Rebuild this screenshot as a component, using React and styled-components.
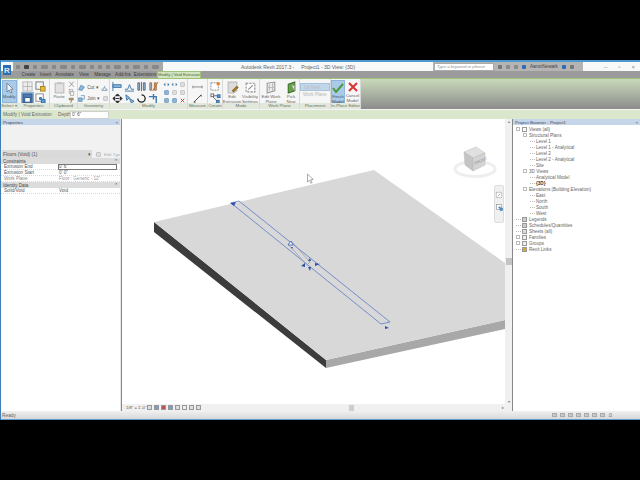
import React from 'react';
import styled, { createGlobalStyle } from 'styled-components';

const Global = createGlobalStyle`
  html, body { margin: 0; padding: 0; background: #000; }
  * { box-sizing: border-box; }
`;

const Page = styled.div`
  width: 640px;
  height: 480px;
  padding: 60px 0;
  background: #000;
  font-family: "Liberation Sans", Arial, sans-serif;
  font-size: 4.6px;
  color: #555;
  overflow: hidden;
`;

const Win = styled.div`
  height: 360px;
  display: flex;
  flex-direction: column;
  background: #f2f2f2;
  border-left: 1px solid #3d7fb5;
`;

const TitleBar = styled.div`
  position: relative;
  height: 11px;
  flex: none;
  display: flex;
  align-items: center;
  border-top: 2px solid #4a9ad0;
  background: #f7f8f8;
`;

const AppLogo = styled.div`
  width: 12px;
  height: 12px;
  padding: 3px 0 0 2px;
  flex: none;
  align-self: flex-start;
  z-index: 2;
  position: relative;
  line-height: 0;
`;

const Qat = styled.div`
  width: 150px;
  height: 9px;
  display: flex;
  align-items: center;
  gap: 4px;
  padding: 0 3px;
  background: #a8a8a8;
  flex: none;
`;

const QatIcon = styled.span`
  width: ${p => p.w || 4}px;
  height: 4px;
  flex: none;
  background: ${p => p.c || '#8a8a8a'};
  border-radius: 1px;
`;

const TitleText = styled.div`
  width: 270px;
  flex: none;
  text-align: center;
  font-size: 5px;
  color: #666;
  white-space: pre;
`;

const HelpBar = styled.div`
  width: 150px;
  height: 9px;
  flex: none;
  display: flex;
  align-items: center;
  gap: 4px;
  padding-left: 1px;
  background: #b4b4b4;
`;

const SearchBox = styled.div`
  width: 60px;
  height: 8px;
  flex: none;
  background: #fff;
  border: 1px solid #aaa;
  color: #888;
  font-style: italic;
  font-size: 4.2px;
  line-height: 6px;
  padding-left: 2px;
`;

const UserName = styled.span`
  color: #444;
  font-size: 4.6px;
  white-space: nowrap;
`;

const WinButtons = styled.div`
  flex: 1;
  display: flex;
  justify-content: flex-end;
  gap: 11px;
  padding-right: 5px;
  color: #888;
  font-size: 6px;
`;

const TabBar = styled.div`
  height: 7px;
  flex: none;
  display: flex;
  align-items: flex-end;
  background: #9b9b9b;
  padding-left: 18px;
  position: relative;
`;

const Tab = styled.div`
  height: 7px;
  width: ${p => p.w}px;
  flex: none;
  text-align: center;
  white-space: nowrap;
  overflow: hidden;
  font-size: ${p => (p.active ? 4.2 : 4.6)}px;
  color: ${p => (p.active ? '#4a6a38' : '#3a3a3a')};
  background: ${p => (p.active ? '#d4e4c0' : 'transparent')};
  border: ${p => (p.active ? '1px solid #9cc27c' : 'none')};
  border-bottom: none;
  line-height: ${p => (p.active ? '6px' : '7px')};
`;

const Ribbon = styled.div`
  height: 31px;
  flex: none;
  display: flex;
  border-top: 1px solid #9cc27c;
  background: linear-gradient(#c9d9ba, #8c8c8c);
`;

const Panel = styled.div`
  width: ${p => p.w}px;
  flex: none;
  display: flex;
  flex-direction: column;
  background: #f5f6f5;
  border-right: 1px solid #d8d8d8;
`;

const PanelBody = styled.div`
  flex: 1;
  display: flex;
  justify-content: ${p => p.justify || 'center'};
  align-items: flex-start;
  gap: ${p => p.gap || 0}px;
  padding-top: 1px;
  min-height: 0;
`;

const PanelLabel = styled.div`
  height: 6px;
  flex: none;
  text-align: center;
  white-space: nowrap;
  overflow: hidden;
  line-height: 6px;
  font-size: 4.4px;
  background: #e2e8dc;
  color: #66735c;
`;

const BigButton = styled.div`
  width: ${p => p.w || 18}px;
  height: 23px;
  flex: none;
  display: flex;
  flex-direction: column;
  align-items: center;
  text-align: center;
  line-height: 5px;
  font-size: 4.4px;
  padding-top: 1px;
  color: ${p => (p.on ? '#456' : '#666')};
  background: ${p => (p.on ? '#a9cbe8' : 'transparent')};
  border: ${p => (p.on ? '1px solid #8fb5d8' : 'none')};
`;

const IconGrid = styled.div`
  display: grid;
  grid-template-columns: repeat(${p => p.cols}, ${p => p.size}px);
  grid-auto-rows: ${p => p.rowh || p.size}px;
  gap: ${p => p.gap || 0}px;
  justify-items: center;
  align-items: center;
`;

const Cell = styled.div`
  display: flex;
  align-items: center;
  justify-content: center;
  background: ${p => (p.on ? '#a9cbe8' : 'transparent')};
  outline: ${p => (p.on ? '1px solid #8fb5d8' : 'none')};
`;

const GeoCol = styled.div`
  display: flex;
  flex-direction: column;
  gap: 3px;
  padding-top: 3px;
`;

const GeoRow = styled.div`
  display: flex;
  align-items: center;
  gap: 2px;
  height: 8px;
  white-space: nowrap;
`;

const DisabledBtn = styled.div`
  width: 30px;
  height: 8px;
  margin-top: ${p => p.mt || 0}px;
  padding-left: 3px;
  line-height: 7px;
  white-space: nowrap;
  color: #b8b8b8;
  background: ${p => (p.on ? '#c2d6ea' : 'transparent')};
  border: ${p => (p.on ? '1px solid #a7c3de' : 'none')};
`;

const OptionsBar = styled.div`
  height: 10px;
  flex: none;
  display: flex;
  align-items: center;
  border-top: 1px solid #f4f4f4;
  background: #dbe7cd;
  padding-left: 2px;
`;

const OptionLabel = styled.span`
  width: ${p => p.w}px;
  flex: none;
  color: #666;
  font-size: 4.8px;
  white-space: nowrap;
`;

const OptionInput = styled.div`
  width: 39px;
  height: 8px;
  background: #fff;
  border: 1px solid #d0d0d0;
  line-height: 6px;
  padding-left: 1px;
  font-size: 4.8px;
`;

const Main = styled.div`
  flex: 1;
  min-height: 0;
  display: flex;
`;

const Dock = styled.div`
  width: ${p => p.w}px;
  flex: none;
  display: flex;
  flex-direction: column;
  background: #fff;
`;

const DockHeader = styled.div`
  height: 6px;
  flex: none;
  display: flex;
  justify-content: space-between;
  align-items: center;
  padding: 0 2px;
  background: #c5d6ea;
  color: #445;
  font-size: 4.4px;
`;

const PropsHead = styled.div`
  height: 25px;
  flex: none;
  background: #f1f1f1;
`;

const TypeRow = styled.div`
  height: 8px;
  flex: none;
  display: flex;
  align-items: center;
  gap: 3px;
  padding: 0 1px;
  background: #f1f1f1;
`;

const TypeSelect = styled.div`
  width: 90px;
  height: 8px;
  flex: none;
  display: flex;
  justify-content: space-between;
  align-items: center;
  padding: 0 1px;
  background: #dadada;
  color: #555;
  font-size: 4.8px;
`;

const EditType = styled.div`
  color: #b0b0b0;
  display: flex;
  align-items: center;
  gap: 2px;
  font-size: 4.4px;
  white-space: nowrap;
`;

const GroupRow = styled.div`
  height: 6px;
  display: flex;
  justify-content: space-between;
  align-items: center;
  padding: 0 2px;
  background: #dcdcdc;
  color: #444;
  font-size: 4.5px;
`;

const PropRow = styled.div`
  display: grid;
  grid-template-columns: 57px 1fr;
  height: 6px;
  line-height: 6px;
  white-space: nowrap;
  border-bottom: 1px dotted #dadada;
`;

const PropName = styled.div`
  padding-left: 3px;
  color: ${p => (p.muted ? '#888' : '#555')};
`;

const PropValue = styled.div`
  padding-left: 1px;
  color: ${p => (p.muted ? '#999' : '#555')};
  outline: ${p => (p.focus ? '1px solid #777' : 'none')};
  outline-offset: -1px;
  margin-right: ${p => (p.focus ? 3 : 0)}px;
`;

const Gutter = styled.div`
  width: 2px;
  flex: none;
  background: #e6e6e6;
  border-right: 1px solid #888;
`;

const ViewCol = styled.div`
  width: 383px;
  flex: none;
  display: flex;
  flex-direction: column;
  background: #fff;
`;

const Canvas = styled.div`
  position: relative;
  flex: 1;
  min-height: 0;
  overflow: hidden;
  background: #fff;

  & > svg.scene { display: block; }
`;

const Cube = styled.div`
  position: absolute;
  left: 331px;
  top: 24px;
  width: 44px;
  height: 38px;
`;

const NavBar = styled.div`
  position: absolute;
  left: 372px;
  top: 66px;
  width: 10px;
  height: 38px;
  display: flex;
  flex-direction: column;
  align-items: center;
  gap: 5px;
  padding-top: 5px;
  background: #f0f0f0;
  border: 1px solid #ddd;
  border-radius: 2px;
`;

const ViewBar = styled.div`
  height: 7px;
  flex: none;
  display: flex;
  align-items: center;
  gap: 1px;
  background: #f0f0f0;
  padding-left: 4px;
`;

const Scale = styled.span`
  width: 20px;
  flex: none;
  color: #555;
  font-size: 4.2px;
  white-space: nowrap;
`;

const HScroll = styled.div`
  flex: 1;
  display: flex;
  justify-content: space-between;
  align-items: center;
  padding: 0 1px 0 146px;
  color: #777;
  font-size: 4px;
`;

const HThumb = styled.div`
  width: 5px;
  height: 6px;
  background: #cdcdcd;
`;

const VScroll = styled.div`
  width: 8px;
  flex: none;
  display: flex;
  flex-direction: column;
  justify-content: space-between;
  align-items: center;
  background: #f0f0f0;
  border-right: 1px solid #888;
  color: #777;
  font-size: 4px;
  padding-bottom: 7px;
`;

const VThumb = styled.div`
  width: 6px;
  height: 7px;
  background: #c4c4c4;
`;

const TreeBody = styled.div`
  flex: 1;
  padding-top: 1px;
  background: #fff;
`;

const TreeRow = styled.div`
  height: 6px;
  display: flex;
  align-items: center;
  gap: 1px;
  padding-left: ${p => 3 + p.level * 7}px;
  color: ${p => (p.bold ? '#333' : '#666')};
  font-weight: ${p => (p.bold ? 'bold' : 'normal')};
  white-space: nowrap;
`;

const Expander = styled.span`
  width: 4px;
  height: 4px;
  flex: none;
  border: 1px solid #bbb;
  margin-right: 1px;
`;

const Dots = styled.span`
  width: 5px;
  flex: none;
  border-top: 1px dotted #bbb;
`;

const Node = styled.span`
  width: 5px;
  height: 5px;
  flex: none;
  margin-right: 1px;
  border: 1px solid #999;
  background: ${p => p.c || '#ddd'};
`;

const StatusBar = styled.div`
  height: 9px;
  flex: none;
  display: flex;
  justify-content: space-between;
  align-items: center;
  padding: 0 28px 0 1px;
  background: linear-gradient(#f0f0f0, #d8d8d8);
  border-bottom: 1px solid #5b9bd0;
  color: #666;
  font-size: 4.8px;
`;

const StatusIcons = styled.div`
  display: flex;
  align-items: center;
  gap: 3px;
`;

const StatusIcon = styled.span`
  width: 5px;
  height: 4px;
  border: 1px solid #aaa;
  background: #c8c8c8;
`;

// small ribbon drawings, all on a 12x12 grid
const shapes = {
  cursor: <path d="M4 1v9l2-2 1.5 3 1.5-.7L7.5 7.5 10 7z" fill="#e8f1f8" stroke="#667" strokeWidth="0.7" />,
  plan: <><rect x="1" y="1" width="10" height="10" fill="#ececec" stroke="#b4b8bc" /><path d="M1 6h10M6 1v10" stroke="#b4b8bc" /></>,
  planGold: <><rect x="1" y="1" width="8" height="8" fill="#f4f4f4" stroke="#777" /><rect x="6" y="6" width="5" height="5" fill="#e8b93c" stroke="#a88420" /></>,
  planBlue: <><rect x="1" y="1" width="10" height="10" fill="#4b79b0" stroke="#2e5586" /><rect x="3" y="5" width="6" height="5" fill="#fff" stroke="#2e5586" /></>,
  gridBlue: <><rect x="1" y="1" width="8" height="8" fill="#fff" stroke="#888" /><path d="M7 7h4v4H7zM5 5h2v2H5z" fill="#5b9bd5" stroke="#2e6ba8" /></>,
  paste: <><rect x="2" y="2" width="8" height="9" fill="#e2e2e2" stroke="#bbb" /><rect x="4" y="1" width="4" height="2" fill="#c4c4c4" /></>,
  scissors: <path d="M2 1l8 9M10 1l-8 9" stroke="#666" fill="none" />,
  copy: <><rect x="2" y="1" width="6" height="7" fill="#eee" stroke="#999" /><rect x="4" y="4" width="6" height="7" fill="#eee" stroke="#999" /></>,
  brush: <path d="M2 2h7v3H2zM6 5v2H5v4" fill="#cfa93a" stroke="#666" />,
  cut: <path d="M1 10l4-8 6 3-4 6z" fill="#8db8dc" stroke="#3f76a8" />,
  join: <><path d="M1 5h6v6H1z" fill="#8db8dc" stroke="#3f76a8" /><path d="M5 1h6v6H7" fill="none" stroke="#3f76a8" /></>,
  beam: <path d="M1 11V1M1 4h9v3H1z" fill="#8db8dc" stroke="#3f76a8" />,
  wave: <path d="M1 9h3l2-5 2 5h3M1 11h10" fill="none" stroke="#3f76a8" />,
  bars: <path d="M2 2h2v8H2zM8 2h2v8H8zM6 1v10" fill="#8db8dc" stroke="#667" />,
  barsRed: <path d="M2 2h2v8H2zM7 2h2v8H7zM11 1L5 11" fill="#8db8dc" stroke="#b06a30" />,
  move: <path d="M6 1l2 2H4zM6 11l2-2H4zM1 6l2-2v4zM11 6L9 4v4zM4 6h4" fill="#222" stroke="#222" />,
  copy2: <path d="M2 2l4 3-3 3zM6 6l5 3-3 2z" fill="#8db8dc" stroke="#3f76a8" />,
  rotate: <path d="M6 2a4 4 0 1 1-4 4" fill="none" stroke="#222" strokeWidth="1.4" />,
  trim: <path d="M1 4h8v7M6 1v6" fill="none" stroke="#3f76a8" strokeWidth="1.5" />,
  smallArrows: <path d="M1 6l3-3v6zM11 6L8 3v6z" fill="#3f76a8" />,
  smallBlock: <rect x="3" y="3" width="6" height="6" fill="#8db8dc" stroke="#3f76a8" />,
  smallGrey: <rect x="3" y="3" width="6" height="6" fill="#e0e0e0" stroke="#aaa" />,
  smallX: <path d="M3 3l6 6M9 3l-6 6" stroke="#c33" strokeWidth="1.6" />,
  measure: <path d="M1 5v3M11 5v3M1 6.5h10" stroke="#888" fill="none" />,
  measure2: <path d="M2 10l8-8M2 10h2M10 2v2" stroke="#444" fill="none" />,
  createTop: <><rect x="1" y="2" width="8" height="8" fill="#fff" stroke="#888" strokeDasharray="2 1" /><circle cx="9" cy="3" r="2" fill="#e08a2c" /></>,
  createBottom: <><rect x="1" y="1" width="3" height="3" fill="#fff" stroke="#667" /><rect x="8" y="2" width="3" height="3" fill="#5b9bd5" stroke="#2e6ba8" /><rect x="7" y="8" width="3" height="3" fill="#5b9bd5" stroke="#2e6ba8" /><path d="M4 3h4M3 4l4 4" stroke="#667" /></>,
  edit: <><path d="M2 1h8v8L7 11H2z" fill="#dcdcdc" stroke="#bbb" /><path d="M6 9l4-4 1 1-4 4z" fill="#dca83a" stroke="#88691c" /></>,
  vis: <><rect x="2" y="2" width="8" height="8" fill="#fff" stroke="#888" strokeDasharray="2 1" /><path d="M4 8l4-4" stroke="#888" /></>,
  plane: <><path d="M2 2l7-1v8l-7 2z" fill="#ececec" stroke="#999" /><path d="M4 3v6M7 2v7M2 6h7" stroke="#bbb" /></>,
  pick: <><path d="M3 3l6-2v8l-6 2z" fill="#64a244" stroke="#3a7024" /><path d="M6 4h3v5" fill="#ddd" stroke="#999" /></>,
  check: <path d="M1 6l3 4 7-8" fill="none" stroke="#4a9a3a" strokeWidth="2" />,
  cross: <path d="M2 2l8 8M10 2l-8 8" stroke="#d33" strokeWidth="2" />,
};

function Ico({ k, s = 10 }) {
  return (
    <svg width={s} height={s} viewBox="0 0 12 12" style={{ flex: 'none' }}>
      {shapes[k]}
    </svg>
  );
}

const tabs = [
  ['Create', 19], ['Insert', 15], ['Annotate', 23], ['View', 16], ['Manage', 21],
  ['Add-Ins', 20], ['Extensions', 24],
];

const tree = [
  { t: 'Views (all)', l: 0, exp: 1, node: '#fff' },
  { t: 'Structural Plans', l: 1, exp: 1 },
  { t: 'Level 1', l: 2 },
  { t: 'Level 1 - Analytical', l: 2 },
  { t: 'Level 2', l: 2 },
  { t: 'Level 2 - Analytical', l: 2 },
  { t: 'Site', l: 2 },
  { t: '3D Views', l: 1, exp: 1 },
  { t: 'Analytical Model', l: 2 },
  { t: '{3D}', l: 2, bold: true },
  { t: 'Elevations (Building Elevation)', l: 1, exp: 1 },
  { t: 'East', l: 2 },
  { t: 'North', l: 2 },
  { t: 'South', l: 2 },
  { t: 'West', l: 2 },
  { t: 'Legends', l: 0, node: '#ccc' },
  { t: 'Schedules/Quantities', l: 0, node: '#ccc' },
  { t: 'Sheets (all)', l: 0, node: '#ddd' },
  { t: 'Families', l: 0, exp: 1, node: '#eee' },
  { t: 'Groups', l: 0, exp: 1, node: '#eee' },
  { t: 'Revit Links', l: 0, node: '#d9a928' },
];

function Scene() {
  return (
    <svg className="scene" width="383" height="285" viewBox="123 119 383 285">
      <polygon points="155,222 327,360 327,368 155,232" fill="#3c3c3c" />
      <polygon points="327,360 506,320 506,329 327,368" fill="#a8a8a8" />
      <polygon points="155,222 375,170 506,263 506,320 327,360" fill="#d8d8d8" />
      <g fill="none" stroke="#5a79c4" strokeWidth="0.8">
        <polygon points="232,203 240,201 391,322 382,324" />
        <polygon points="289,244 293,242 311,262 308,265" stroke="#9a9fb0" />
      </g>
      <polygon points="289,245 292,241 294,245" fill="#fff" stroke="#3a5cb0" strokeWidth="0.8" />
      <g fill="#2f4fa8">
        <polygon points="231,203 237,202 235,206" />
        <polygon points="386,326 390,328 386,329" />
        <polygon points="302,266 306,263 306,267" />
        <polygon points="316,263 321,264 316,266" />
        <polygon points="309,261 312,261 311,258" />
        <polygon points="309,267 312,267 311,271" />
        <polygon points="292,247 294,247 293,249" />
      </g>
      <path d="M308.5 174v8l2-1.8 1.4 3 1.2-.6-1.4-2.9 2.6-.2z" fill="#fff" stroke="#777" strokeWidth="0.6" />
    </svg>
  );
}

function NavCube() {
  return (
    <svg width="44" height="38" viewBox="0 0 44 38">
      <ellipse cx="22" cy="26" rx="20" ry="7.5" fill="none" stroke="#eeeeee" strokeWidth="3" />
      <polygon points="11,9 23,4 32,10 20,15" fill="#e0e0e0" stroke="#b8b8b8" strokeWidth="0.5" />
      <polygon points="11,9 20,15 20,28 12,22" fill="#c4c4c4" stroke="#b8b8b8" strokeWidth="0.5" />
      <polygon points="20,15 32,10 32,22 20,28" fill="#d4d4d4" stroke="#b8b8b8" strokeWidth="0.5" />
      <text x="22" y="22" fontSize="4" fill="#888" transform="rotate(-24 22 22)">FRONT</text>
    </svg>
  );
}

export default function App() {
  return (
    <Page>
      <Global />
      <Win>
        <TitleBar>
          <AppLogo>
            <svg width="8" height="10" viewBox="0 0 8 10">
              <rect width="8" height="10" fill="#2f6db3" />
              <text x="1" y="8" fontSize="8" fontWeight="bold" fontFamily="Liberation Sans" fill="#dbe8f6">R</text>
            </svg>
          </AppLogo>
          <Qat>
            {[4, 5, 4, 7, 4, 7, 4, 7, 4, 4, 4, 7, 4, 7, 4, 7].map((w, i) => (
              <QatIcon key={i} w={w} c={i === 1 ? '#444' : '#888'} />
            ))}
          </Qat>
          <TitleText>{'Autodesk Revit 2017.3 -     Project1 - 3D View: {3D}'}</TitleText>
          <HelpBar>
            <SearchBox>Type a keyword or phrase</SearchBox>
            <QatIcon c="#777" />
            <QatIcon />
            <QatIcon />
            <QatIcon c="#2f6db3" />
            <UserName>AaronNewark</UserName>
            <QatIcon c="#2f6db3" />
            <QatIcon c="#777" />
          </HelpBar>
          <WinButtons>
            <span>–</span>
            <span>▫</span>
            <span>×</span>
          </WinButtons>
        </TitleBar>

        <TabBar>
          {tabs.map(([t, w]) => <Tab key={t} w={w}>{t}</Tab>)}
          <Tab w={44} active>Modify | Void Extrusion</Tab>
        </TabBar>

        <Ribbon>
          <Panel w={17}>
            <PanelBody><BigButton w={15} on><Ico k="cursor" s={12} />Modify</BigButton></PanelBody>
            <PanelLabel>Select ▾</PanelLabel>
          </Panel>
          <Panel w={32}>
            <PanelBody>
              <IconGrid cols={2} size={13} rowh={12}>
                <Cell><Ico k="plan" s={11} /></Cell>
                <Cell><Ico k="planGold" s={11} /></Cell>
                <Cell on><Ico k="planBlue" s={11} /></Cell>
                <Cell><Ico k="gridBlue" s={11} /></Cell>
              </IconGrid>
            </PanelBody>
            <PanelLabel>Properties</PanelLabel>
          </Panel>
          <Panel w={28}>
            <PanelBody gap={1}>
              <BigButton w={14}><Ico k="paste" s={13} />Paste</BigButton>
              <IconGrid cols={1} size={8}>
                <Ico k="scissors" s={7} />
                <Ico k="copy" s={7} />
                <Ico k="brush" s={7} />
              </IconGrid>
            </PanelBody>
            <PanelLabel>Clipboard</PanelLabel>
          </Panel>
          <Panel w={32}>
            <PanelBody>
              <GeoCol>
                <GeoRow><Ico k="cut" s={7} />Cut ▾<Ico k="wave" s={7} /></GeoRow>
                <GeoRow><Ico k="join" s={7} />Join ▾<Ico k="smallGrey" s={7} /></GeoRow>
              </GeoCol>
            </PanelBody>
            <PanelLabel>Geometry</PanelLabel>
          </Panel>
          <Panel w={78}>
            <PanelBody gap={3}>
              <IconGrid cols={4} size={12} rowh={12}>
                <Ico k="beam" s={11} />
                <Ico k="wave" s={11} />
                <Ico k="bars" s={11} />
                <Ico k="barsRed" s={11} />
                <Ico k="move" s={11} />
                <Ico k="copy2" s={11} />
                <Ico k="rotate" s={11} />
                <Ico k="trim" s={11} />
              </IconGrid>
              <IconGrid cols={3} size={8}>
                <Ico k="smallArrows" s={7} />
                <Ico k="smallArrows" s={7} />
                <Ico k="smallGrey" s={7} />
                <Ico k="smallBlock" s={7} />
                <Ico k="smallGrey" s={7} />
                <Ico k="smallGrey" s={7} />
                <Ico k="smallBlock" s={7} />
                <Ico k="smallBlock" s={7} />
                <Ico k="smallX" s={7} />
              </IconGrid>
            </PanelBody>
            <PanelLabel>Modify</PanelLabel>
          </Panel>
          <Panel w={20}>
            <PanelBody>
              <IconGrid cols={1} size={16} rowh={12}>
                <Ico k="measure" s={11} />
                <Ico k="measure2" s={11} />
              </IconGrid>
            </PanelBody>
            <PanelLabel>Measure</PanelLabel>
          </Panel>
          <Panel w={15}>
            <PanelBody>
              <IconGrid cols={1} size={14} rowh={12}>
                <Ico k="createTop" s={11} />
                <Ico k="createBottom" s={11} />
              </IconGrid>
            </PanelBody>
            <PanelLabel>Create</PanelLabel>
          </Panel>
          <Panel w={37}>
            <PanelBody>
              <BigButton><Ico k="edit" s={13} />Edit Extrusion</BigButton>
              <BigButton><Ico k="vis" s={13} />Visibility Settings</BigButton>
            </PanelBody>
            <PanelLabel>Mode</PanelLabel>
          </Panel>
          <Panel w={40}>
            <PanelBody gap={2}>
              <BigButton w={21}><Ico k="plane" s={13} />Edit Work Plane</BigButton>
              <BigButton w={15}><Ico k="pick" s={13} />Pick New</BigButton>
            </PanelBody>
            <PanelLabel>Work Plane</PanelLabel>
          </Panel>
          <Panel w={31}>
            <PanelBody>
              <div>
                <DisabledBtn on mt={3}>Up Next</DisabledBtn>
                <DisabledBtn>Work Plane</DisabledBtn>
              </div>
            </PanelBody>
            <PanelLabel>Placement</PanelLabel>
          </Panel>
          <Panel w={30}>
            <PanelBody justify="flex-start">
              <BigButton w={14} on><Ico k="check" s={12} />Finish Model</BigButton>
              <BigButton w={15}><Ico k="cross" s={12} />Cancel Model</BigButton>
            </PanelBody>
            <PanelLabel>In-Place Editor</PanelLabel>
          </Panel>
        </Ribbon>

        <OptionsBar>
          <OptionLabel w={55}>Modify | Void Extrusion</OptionLabel>
          <OptionLabel w={12}>Depth</OptionLabel>
          <OptionInput>0' 6"</OptionInput>
        </OptionsBar>

        <Main>
          <Dock w={119}>
            <DockHeader>Properties<span>×</span></DockHeader>
            <PropsHead />
            <TypeRow>
              <TypeSelect>Floors (Void) (1)<span>▾</span></TypeSelect>
              <EditType><Ico k="smallGrey" s={7} />Edit Type</EditType>
            </TypeRow>
            <GroupRow>Constraints<span>⌃</span></GroupRow>
            <PropRow><PropName>Extrusion End</PropName><PropValue focus>0' 6"</PropValue></PropRow>
            <PropRow><PropName>Extrusion Start</PropName><PropValue>0' 0"</PropValue></PropRow>
            <PropRow><PropName muted>Work Plane</PropName><PropValue muted>Floor : Generic - 12"</PropValue></PropRow>
            <GroupRow>Identity Data<span>⌃</span></GroupRow>
            <PropRow><PropName>Solid/Void</PropName><PropValue>Void</PropValue></PropRow>
          </Dock>
          <Gutter />
          <ViewCol>
            <Canvas>
              <Scene />
              <Cube><NavCube /></Cube>
              <NavBar>
                <Ico k="vis" s={8} />
                <Ico k="gridBlue" s={7} />
              </NavBar>
            </Canvas>
            <ViewBar>
              <Scale>1/8" = 1'-0"</Scale>
              {['#ddd', '#6a9fd0', '#c05050', '#6a9fd0', '#ddd', '#eee', '#ddd', '#ddd'].map((c, i) => (
                <Node key={i} c={c} />
              ))}
              <HScroll><HThumb /><span>▸</span></HScroll>
            </ViewBar>
          </ViewCol>
          <VScroll>
            <span>▴</span>
            <VThumb />
            <span>▾</span>
          </VScroll>
          <Dock w={127}>
            <DockHeader>Project Browser - Project1<span>×</span></DockHeader>
            <TreeBody>
              {tree.map(r => (
                <TreeRow key={r.t} level={r.l} bold={r.bold}>
                  {r.exp ? <Expander /> : <Dots />}
                  {r.node && <Node c={r.node} />}
                  {r.t}
                </TreeRow>
              ))}
            </TreeBody>
          </Dock>
        </Main>

        <StatusBar>
          Ready
          <StatusIcons>
            {[0, 1, 2, 3, 4, 5, 6].map(i => <StatusIcon key={i} />)}
            <span>:0</span>
          </StatusIcons>
        </StatusBar>
      </Win>
    </Page>
  );
}
